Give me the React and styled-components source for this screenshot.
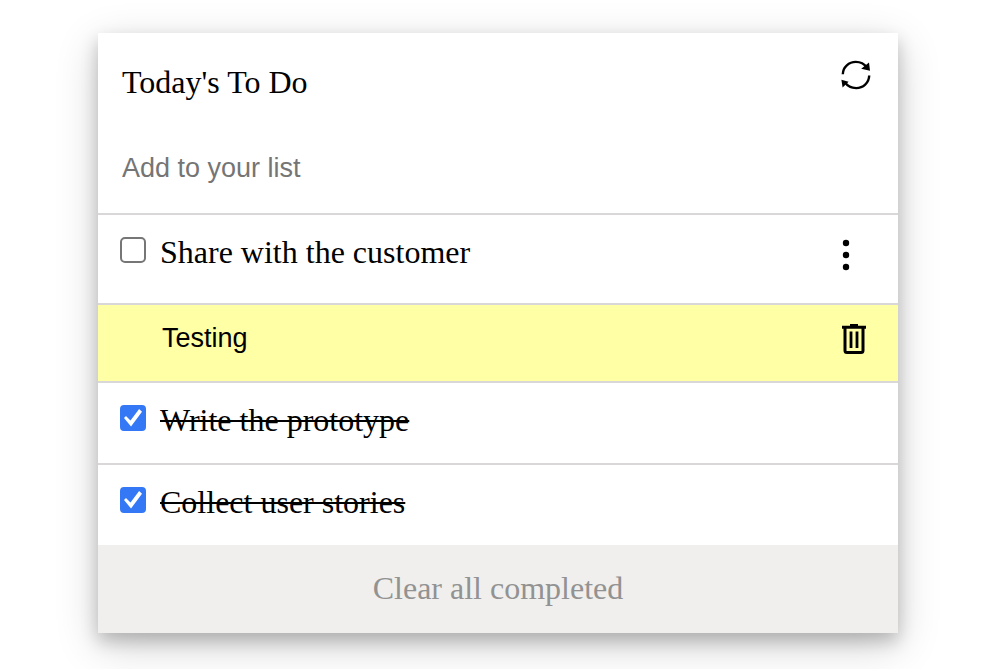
import React, { useState } from "react";
import styled, { createGlobalStyle, css } from "styled-components";

const GlobalStyle = createGlobalStyle`
  *, *::before, *::after {
    box-sizing: border-box;
  }
  body {
    margin: 0;
    background: #fff;
    color: #000;
    font-family: "Liberation Serif", "Times New Roman", serif;
    font-size: 32px;
    line-height: 34px;
  }
`;

const Page = styled.main`
  padding: 33px 32px 36px;
`;

const Card = styled.section`
  max-width: 800px;
  margin: 0 auto;
  background: #fff;
  box-shadow: 0 8px 16px rgba(0, 0, 0, 0.2), 0 12px 40px rgba(0, 0, 0, 0.19);
`;

const Header = styled.header`
  display: flex;
  align-items: flex-start;
  justify-content: space-between;
  padding: 24px 26px 0 24px;
`;

const Title = styled.h1`
  margin: 0;
  padding-top: 8px;
  font-size: 32px;
  font-weight: 400;
  line-height: 34px;
`;

const IconButton = styled.button`
  display: flex;
  flex: none;
  padding: 0;
  border: 0;
  background: none;
  color: #000;
  cursor: pointer;
`;

const AddForm = styled.form`
  padding: 51px 24px 27px;
`;

const TextInput = styled.input`
  display: block;
  width: 100%;
  min-width: 0;
  height: 36px;
  padding: 0;
  border: 0;
  outline: 0;
  background: transparent;
  color: #000;
  font-family: "Liberation Sans", Arial, sans-serif;
  font-size: 27px;

  &::placeholder {
    color: #757575;
    opacity: 1;
  }
`;

const List = styled.ul`
  margin: 0;
  padding: 0;
  list-style: none;
`;

const Item = styled.li`
  display: flex;
  align-items: flex-start;
  justify-content: space-between;
  min-height: ${({ $open }) => ($open ? 90 : 82)}px;
  padding: 20px 32px 24px 22px;
  border-top: 2px solid #d9d7d7;

  ${({ $editing }) =>
    $editing &&
    css`
      min-height: 78px;
      padding: 15px 30px 20px 64px;
      background: #ffffa6;
    `}
`;

const TaskLabel = styled.label`
  display: flex;
  align-items: flex-start;
  gap: 14px;
  text-decoration: ${({ $done }) => ($done ? "line-through 2px" : "none")};
  cursor: pointer;
`;

const Checkbox = styled.input`
  flex: none;
  appearance: none;
  display: grid;
  place-items: center;
  width: 26px;
  height: 26px;
  margin: 2px 0 0;
  border: 2px solid #767676;
  border-radius: 5px;
  background: #fff;

  &:checked {
    border-color: #3478f6;
    border-radius: 4px;
    background: #3478f6;
  }

  &:checked::before {
    content: "";
    width: 18px;
    height: 18px;
    background: #fff;
    clip-path: polygon(0 50%, 11% 39%, 36% 64%, 84% 0, 100% 15%, 39% 97%);
  }
`;

const ClearButton = styled.button`
  display: block;
  width: 100%;
  padding: 26px 24px 28px;
  border: 0;
  background: #f0efed;
  color: #929292;
  font: inherit;
  text-align: center;
  cursor: pointer;
`;

function RefreshIcon() {
  return (
    <svg width="32" height="36" viewBox="0 0 32 36" aria-hidden="true">
      <g fill="none" stroke="currentColor" strokeWidth="2.4">
        <path d="M2.8 17.2C3 9.8 9 4.9 15.8 4.9C20.6 4.9 24.4 7 27 10.6" />
        <path d="M29.2 18.5C29 26 23 31.1 16.2 31.1C11.4 31.1 7.2 28.8 4.8 25.2" />
      </g>
      <path d="M29 5.6L30 13.8L21.2 11.8Z M1.4 22.8L8.6 24.8L2.6 30.4Z" fill="currentColor" />
    </svg>
  );
}

function MoreIcon() {
  return (
    <svg width="40" height="40" viewBox="0 0 40 40" fill="currentColor" aria-hidden="true">
      <circle cx="20" cy="8" r="3.2" />
      <circle cx="20" cy="20" r="3.2" />
      <circle cx="20" cy="32" r="3.2" />
    </svg>
  );
}

function TrashIcon() {
  return (
    <svg width="28" height="38" viewBox="0 0 28 38" aria-hidden="true">
      <path
        d="M2 7.3H26M10 5.6H18M5 7.5V30.5Q5 32.6 7 32.6H21Q23 32.6 23 30.5V7.5"
        fill="none"
        stroke="currentColor"
        strokeWidth="3"
      />
      <path d="M11 11.6V28M17 11.6V28" fill="none" stroke="currentColor" strokeWidth="2.8" />
    </svg>
  );
}

const initialTasks = [
  { id: 1, text: "Share with the customer", done: false },
  { id: 2, text: "Testing", done: false, editing: true },
  { id: 3, text: "Write the prototype", done: true },
  { id: 4, text: "Collect user stories", done: true },
];

export default function App() {
  const [tasks, setTasks] = useState(initialTasks);
  const [draft, setDraft] = useState("");

  const update = (id, changes) =>
    setTasks((all) => all.map((task) => (task.id === id ? { ...task, ...changes } : task)));

  const addTask = (event) => {
    event.preventDefault();
    if (!draft.trim()) return;
    setTasks((all) => [...all, { id: Date.now(), text: draft.trim(), done: false }]);
    setDraft("");
  };

  return (
    <>
      <GlobalStyle />
      <Page>
        <Card>
          <Header>
            <Title>Today's To Do</Title>
            <IconButton type="button" aria-label="Refresh" onClick={() => setTasks(initialTasks)}>
              <RefreshIcon />
            </IconButton>
          </Header>
          <AddForm onSubmit={addTask}>
            <TextInput
              aria-label="Add to your list"
              placeholder="Add to your list"
              value={draft}
              onChange={(event) => setDraft(event.target.value)}
            />
          </AddForm>
          <List>
            {tasks.map((task) =>
              task.editing ? (
                <Item key={task.id} $editing>
                  <TextInput
                    aria-label="Edit task"
                    value={task.text}
                    onChange={(event) => update(task.id, { text: event.target.value })}
                  />
                  <IconButton
                    type="button"
                    aria-label="Delete task"
                    onClick={() => setTasks((all) => all.filter(({ id }) => id !== task.id))}
                  >
                    <TrashIcon />
                  </IconButton>
                </Item>
              ) : (
                <Item key={task.id} $open={!task.done}>
                  <TaskLabel $done={task.done}>
                    <Checkbox
                      type="checkbox"
                      checked={task.done}
                      onChange={(event) => update(task.id, { done: event.target.checked })}
                    />
                    <span>{task.text}</span>
                  </TaskLabel>
                  {!task.done && (
                    <IconButton
                      type="button"
                      aria-label="Task options"
                      onClick={() => update(task.id, { editing: true })}
                    >
                      <MoreIcon />
                    </IconButton>
                  )}
                </Item>
              )
            )}
          </List>
          <ClearButton type="button" onClick={() => setTasks((all) => all.filter((task) => !task.done))}>
            Clear all completed
          </ClearButton>
        </Card>
      </Page>
    </>
  );
}
